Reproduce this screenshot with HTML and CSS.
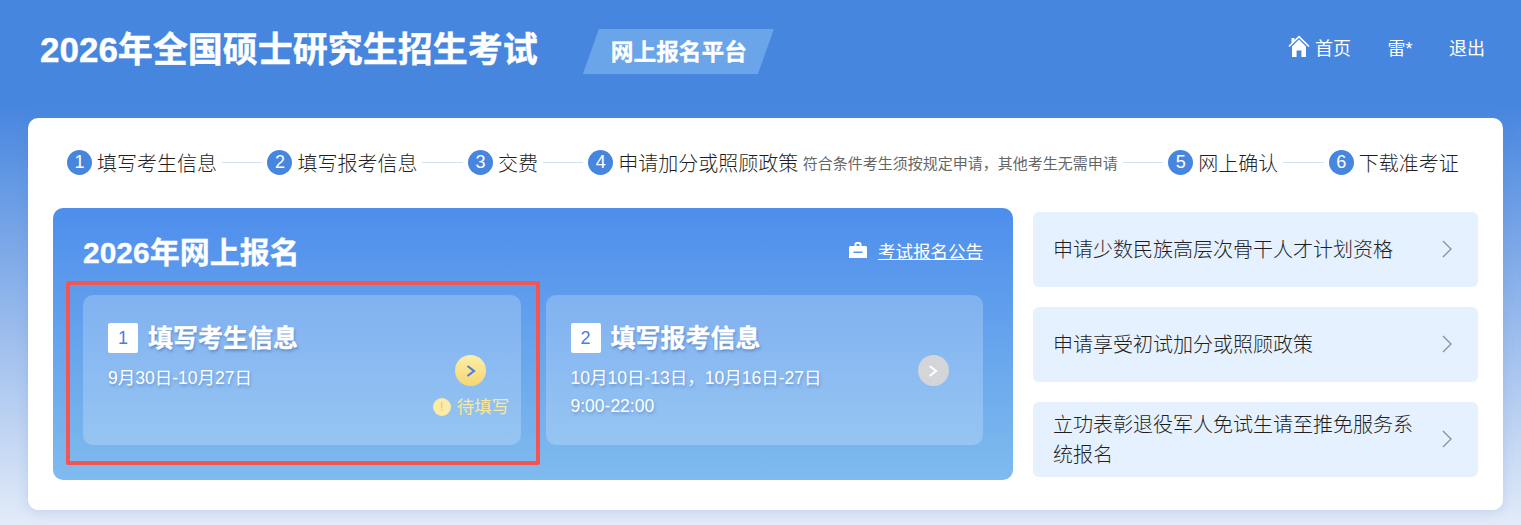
FILE: index.html
```html
<!DOCTYPE html>
<html lang="zh-CN">
<head>
  <meta charset="UTF-8" />
  <title>网上报名平台</title>
  <link rel="stylesheet" href="styles.css">
</head>
<body>

<header class="top">
  <h1 class="top-title">2026年全国硕士研究生招生考试</h1>
  <div class="top-badge"><span>网上报名平台</span></div>
  <nav class="top-nav">
    <a class="home-link">
      <svg class="home-icon" viewBox="0 0 22 22">
        <path d="M1 11.500 11 1.600l10 9.900" fill="none" stroke="#fff" stroke-width="1.600"/>
        <path d="M3.500 3h3v3.500l-3 3z" fill="#fff"/>
        <path d="M4 11.500 11 4.600l7 6.900V22h-4.600v-6.600H8.600V22H4z" fill="#fff"/>
      </svg>
      首页
    </a>
    <a>雷*</a>
    <a>退出</a>
  </nav>
</header>

<main class="card">
  <ol class="steps">
    <li class="step"><b>1</b>填写考生信息</li>
    <li class="step-line"></li>
    <li class="step"><b>2</b>填写报考信息</li>
    <li class="step-line"></li>
    <li class="step"><b>3</b>交费</li>
    <li class="step-line"></li>
    <li class="step"><b>4</b>申请加分或照顾政策<small>符合条件考生须按规定申请，其他考生无需申请</small></li>
    <li class="step-line"></li>
    <li class="step"><b>5</b>网上确认</li>
    <li class="step-line"></li>
    <li class="step"><b>6</b>下载准考证</li>
  </ol>

  <div class="content">
    <section class="panel">
      <div class="panel-head">
        <h2>2026年网上报名</h2>
        <a class="notice">
          <svg class="notice-icon" viewBox="0 0 18 16">
            <path d="M5.500 4V1.500L7 0h4l1.500 1.500V4h4C17.400 4 18 4.600 18 5.500V16H0V5.500C0 4.600.6 4 1.500 4zM7.500 2v2h3V2zM4.500 9.500V11h9V9.500z" fill="#fff" fill-rule="evenodd"/>
          </svg>
          <u>考试报名公告</u>
        </a>
      </div>
      <div class="tasks">
        <div class="task">
          <div class="task-main">
            <h3><span class="task-num">1</span>填写考生信息</h3>
            <p>9月30日-10月27日</p>
          </div>
          <div class="task-side">
            <span class="go go-active">
              <svg viewBox="0 0 12 14"><path d="M2.500 2 9 7l-6.500 5" fill="none" stroke="#4a7fdc" stroke-width="2.200"/></svg>
            </span>
            <span class="status"><i>!</i>待填写</span>
          </div>
        </div>
        <div class="task">
          <div class="task-main">
            <h3><span class="task-num">2</span>填写报考信息</h3>
            <p>10月10日-13日，10月16日-27日<br>9:00-22:00</p>
          </div>
          <div class="task-side">
            <span class="go">
              <svg viewBox="0 0 12 14"><path d="M2.500 2 9 7l-6.500 5" fill="none" stroke="#fff" stroke-width="2.200"/></svg>
            </span>
          </div>
        </div>
      </div>
      <div class="focus-box"></div>
    </section>

    <aside class="links">
      <a class="link-item"><span>申请少数民族高层次骨干人才计划资格</span><svg viewBox="0 0 10 18"><path d="M1 1l8 8-8 8" fill="none" stroke="#8c939d" stroke-width="1.400"/></svg></a>
      <a class="link-item"><span>申请享受初试加分或照顾政策</span><svg viewBox="0 0 10 18"><path d="M1 1l8 8-8 8" fill="none" stroke="#8c939d" stroke-width="1.400"/></svg></a>
      <a class="link-item"><span>立功表彰退役军人免试生请至推免服务系统报名</span><svg viewBox="0 0 10 18"><path d="M1 1l8 8-8 8" fill="none" stroke="#8c939d" stroke-width="1.400"/></svg></a>
    </aside>
  </div>
</main>

</body>
</html>
```

FILE: styles.css
```css
* {
  box-sizing: border-box;
}
html, body {
  height: 525px;
}
body {
  margin: 0;
  overflow: hidden;
  font-family: "Liberation Sans", "Noto Sans CJK SC", sans-serif;
  background: linear-gradient(180deg, #4786df 0, #4786df 105px, #e3ebf8 525px);
}

/* header */
.top {
  display: flex;
  align-items: flex-start;
  height: 118px;
  padding: 29px 36px 0 40px;
  color: #fff;
}
.top-title {
  margin: 0 45px 0 0;
  font-size: 35px;
  line-height: 41px;
  font-weight: bold;
  -webkit-text-stroke: 0.4px #fff;
}
.top-badge {
  display: flex;
  align-items: center;
  justify-content: center;
  width: 191px;
  height: 45px;
  padding: 0 0 3px 1px;
  background: #6ba5e9;
  clip-path: polygon(16px 0, 100% 0, calc(100% - 16px) 100%, 0 100%);
  font-size: 22.700px;
  font-weight: bold;
  -webkit-text-stroke: 0.3px #fff;
}
.top-nav {
  display: flex;
  gap: 36.500px;
  margin-left: auto;
  font-size: 18px;
  line-height: 41px;
}
.home-link {
  display: flex;
  align-items: center;
}
.home-icon {
  width: 22px;
  height: 22px;
  margin: -8px 5px 0 0;
}

/* white card */
.card {
  width: 1475px;
  height: 392px;
  margin-left: 28px;
  padding: 28px 25px 0;
  background: #fff;
  border-radius: 10px;
  box-shadow: 0 2px 12px rgba(70, 120, 200, 0.18);
}
.steps {
  display: flex;
  align-items: center;
  margin: 0;
  padding: 0 19.200px 0 14px;
  height: 32px;
  list-style: none;
}
.step {
  display: flex;
  align-items: center;
  font-size: 20px;
  font-weight: 300;
  color: #1f1f1f;
  white-space: nowrap;
}
.step b {
  width: 25px;
  height: 25px;
  margin-right: 5px;
  border-radius: 50%;
  background: #4786df;
  color: #fff;
  font-size: 18px;
  font-weight: normal;
  line-height: 24px;
  text-align: center;
}
.step small {
  margin-left: 4.500px;
  font-size: 15px;
  font-weight: 400;
  color: #666;
}
.step-line {
  flex: 1;
  height: 1px;
  margin: 0 5px;
  background: #d3e2ee;
}

.content {
  display: flex;
  margin-top: 30px;
}

/* blue panel */
.panel {
  position: relative;
  width: 960px;
  height: 272px;
  padding: 0 30px;
  border-radius: 10px;
  background: linear-gradient(180deg, #4e8eec 0, #7fbbee 100%);
  color: #fff;
}
.panel-head {
  display: flex;
  align-items: center;
  justify-content: space-between;
  height: 87px;
  padding-bottom: 3px;
}
.panel-head h2 {
  margin: 0;
  font-size: 30px;
  font-weight: bold;
  -webkit-text-stroke: 0.3px #fff;
}
.notice {
  display: flex;
  align-items: center;
  font-size: 17.500px;
}
.notice-icon {
  width: 18px;
  height: 16px;
  margin-right: 11px;
}
.tasks {
  display: flex;
  gap: 25px;
}
.task {
  display: flex;
  flex: 1;
  height: 150px;
  padding: 28px 11px 0 25px;
  border-radius: 10px;
  background: rgba(255, 255, 255, 0.22);
}
.task-main {
  flex: 1;
}
.task h3 {
  display: flex;
  align-items: center;
  margin: 0 0 11px;
  font-size: 25px;
  line-height: 30px;
  font-weight: bold;
  -webkit-text-stroke: 0.3px #fff;
  text-shadow: 1px 2px 3px rgba(40, 80, 150, 0.45);
}
.task-num {
  width: 30px;
  height: 30px;
  margin-right: 10px;
  border-radius: 2px;
  background: #fff;
  color: #4a7fdc;
  font-size: 18px;
  font-weight: normal;
  text-align: center;
  text-shadow: none;
  -webkit-text-stroke: 0;
}
.task p {
  margin: 0;
  font-size: 17.500px;
  line-height: 28px;
  text-shadow: 1px 2px 3px rgba(40, 80, 150, 0.35);
}
.task-side {
  display: flex;
  flex-direction: column;
  align-items: center;
  width: 78px;
  padding-top: 32px;
}
.go {
  display: flex;
  align-items: center;
  justify-content: center;
  width: 31px;
  height: 31px;
  border-radius: 50%;
  background: #d3d5d9;
}
.go svg {
  width: 12px;
  height: 14px;
}
.go-active {
  background: linear-gradient(180deg, #fdeeaa 0, #f6d670 100%);
}
.status {
  display: flex;
  align-items: center;
  margin: 9px 0 0 1px;
  font-size: 17.500px;
  line-height: 24px;
  color: #f8e79c;
  white-space: nowrap;
}
.status i {
  width: 18px;
  height: 18px;
  margin-right: 6px;
  border-radius: 50%;
  background: #fbeba6;
  color: #e2c968;
  font-size: 12px;
  font-style: normal;
  line-height: 18px;
  text-align: center;
}
.focus-box {
  position: absolute;
  left: 13px;
  top: 73px;
  width: 474px;
  height: 184px;
  border: 4px solid #f45552;
  border-radius: 2px;
}

/* right links */
.links {
  display: flex;
  flex-direction: column;
  gap: 20px;
  width: 445px;
  margin: 4px 0 0 20px;
}
.link-item {
  display: flex;
  align-items: center;
  height: 75px;
  padding: 0 26px 0 20px;
  border-radius: 6px;
  background: #e5f1fe;
  color: #1f1f1f;
  font-size: 20px;
  font-weight: 300;
  line-height: 30px;
}
.link-item span {
  flex: 1;
  padding-right: 20px;
}
.link-item svg {
  width: 10px;
  height: 18px;
  margin-top: -2px;
}
```
